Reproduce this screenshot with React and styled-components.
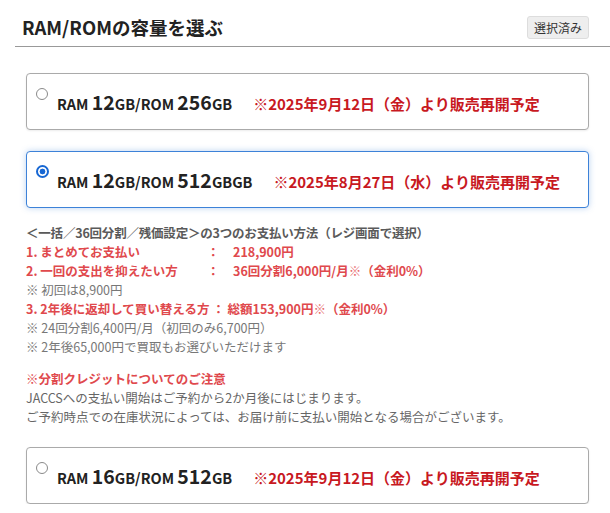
import React from 'react';
import styled, { createGlobalStyle } from 'styled-components';

const GlobalStyle = createGlobalStyle`
  body {
    margin: 0;
    background: #fff;
    font-family: "Noto Sans CJK JP", "Noto Sans", sans-serif;
    color: #222;
  }
`;

const Page = styled.div`
  width: 610px;
  overflow: hidden;
`;

const Header = styled.div`
  margin-left: 15px;
  padding: 16px 21px 7px 7px;
  display: flex;
  justify-content: space-between;
  align-items: center;
  border-bottom: 1px solid #999;
`;

const Title = styled.h2`
  margin: 0;
  font-size: 18.5px;
  font-weight: 700;
  line-height: 23px;
  color: #222;
`;

const DoneButton = styled.button`
  height: 23px;
  padding: 0 6px;
  border: 1px solid #ddd;
  border-radius: 3px;
  background: #eee;
  font-family: inherit;
  font-size: 12px;
  color: #333;
  line-height: 21px;
`;

const Body = styled.div`
  margin: 26px 21px 0 26px;
`;

const Card = styled.div`
  display: flex;
  align-items: flex-start;
  box-sizing: border-box;
  height: 57px;
  padding: 14px 12px 0 9px;
  border: ${p => (p.selected ? '1.5px solid #3d82d8' : '1px solid #aaa')};
  border-radius: 4px;
  box-shadow: ${p => (p.selected ? '0 0 6px rgba(61, 130, 216, 0.35)' : '0 1px 2px rgba(0, 0, 0, 0.08)')};
  background: #fff;
  margin-top: ${p => p.gap || 0}px;
`;

const Radio = styled.span`
  flex: none;
  box-sizing: border-box;
  border-radius: 50%;
  width: ${p => (p.checked ? '13px' : '12px')};
  height: ${p => (p.checked ? '13px' : '12px')};
  margin-top: ${p => (p.checked ? '-1px' : '0')};
  margin-right: ${p => (p.checked ? '-1px' : '0')};
  border: ${p => (p.checked ? '2px solid #1767d3' : '1px solid #8a8a8a')};
  background: ${p => (p.checked ? 'radial-gradient(circle, #1767d3 0 2.6px, #fff 3.2px)' : '#fff')};
`;

const Label = styled.div`
  margin-left: 9px;
  line-height: 28px;
  white-space: nowrap;
  font-weight: 700;
  color: #222;
  font-size: 14.5px;
`;

const Big = styled.span`
  font-size: 19.5px;
`;

const Release = styled.span`
  margin-left: 21px;
  font-size: 15px;
  font-weight: 700;
  color: #c8191f;
`;

const Payment = styled.div`
  margin-top: 15px;
  font-size: 12.5px;
  line-height: 19px;
  color: #777;
`;

const Lead = styled.div`
  font-weight: 700;
  color: #5a5a5a;
  letter-spacing: -0.2px;
`;

const RedLine = styled.div`
  font-weight: 700;
  color: #e0494d;
`;

const Term = styled.span`
  display: inline-block;
  width: 181px;
`;

const Colon = styled.span`
  display: inline-block;
  width: 26px;
`;

const Mark = styled.span`
  font-weight: 400;
  color: #e86a6d;
`;

const Note = styled.div`
  color: #777;
`;

const Caution = styled.div`
  margin-top: 13px;
  font-size: 12.5px;
  line-height: 19px;
  color: #666;
`;

const CautionTitle = styled.div`
  font-weight: 700;
  color: #e0494d;
`;

const options = [
  { ram: '12', rom: '256', suffix: 'GB', date: '※2025年9月12日（金）より販売再開予定' },
  { ram: '12', rom: '512', suffix: 'GBGB', date: '※2025年8月27日（水）より販売再開予定', selected: true },
  { ram: '16', rom: '512', suffix: 'GB', date: '※2025年9月12日（金）より販売再開予定' },
];

const Option = ({ opt, gap }) => (
  <Card selected={opt.selected} gap={gap}>
    <Radio checked={opt.selected} />
    <Label>
      RAM <Big>{opt.ram}</Big>GB/ROM <Big>{opt.rom}</Big>{opt.suffix}
      <Release>{opt.date}</Release>
    </Label>
  </Card>
);

const App = () => {
  return (
    <Page>
      <GlobalStyle />
      <Header>
        <Title>RAM/ROMの容量を選ぶ</Title>
        <DoneButton>選択済み</DoneButton>
      </Header>
      <Body>
        <Option opt={options[0]} />
        <Option opt={options[1]} gap={21} />
        <Payment>
          <Lead>＜一括／36回分割／残価設定＞の3つのお支払い方法（レジ画面で選択）</Lead>
          <RedLine>
            <Term>1. まとめてお支払い</Term>
            <Colon>：</Colon>218,900円
          </RedLine>
          <RedLine>
            <Term>2. 一回の支出を抑えたい方</Term>
            <Colon>：</Colon>36回分割6,000円/月<Mark>※</Mark>（金利0%）
          </RedLine>
          <Note>※ 初回は8,900円</Note>
          <RedLine>
            3. 2年後に返却して買い替える方 ： 総額153,900円<Mark>※</Mark>（金利0%）
          </RedLine>
          <Note>※ 24回分割6,400円/月（初回のみ6,700円）</Note>
          <Note>※ 2年後65,000円で買取もお選びいただけます</Note>
        </Payment>
        <Caution>
          <CautionTitle>※分割クレジットについてのご注意</CautionTitle>
          <div>JACCSへの支払い開始はご予約から2か月後にはじまります。</div>
          <div>ご予約時点での在庫状況によっては、お届け前に支払い開始となる場合がございます。</div>
        </Caution>
        <Option opt={options[2]} gap={21} />
      </Body>
    </Page>
  );
};

export default App;
